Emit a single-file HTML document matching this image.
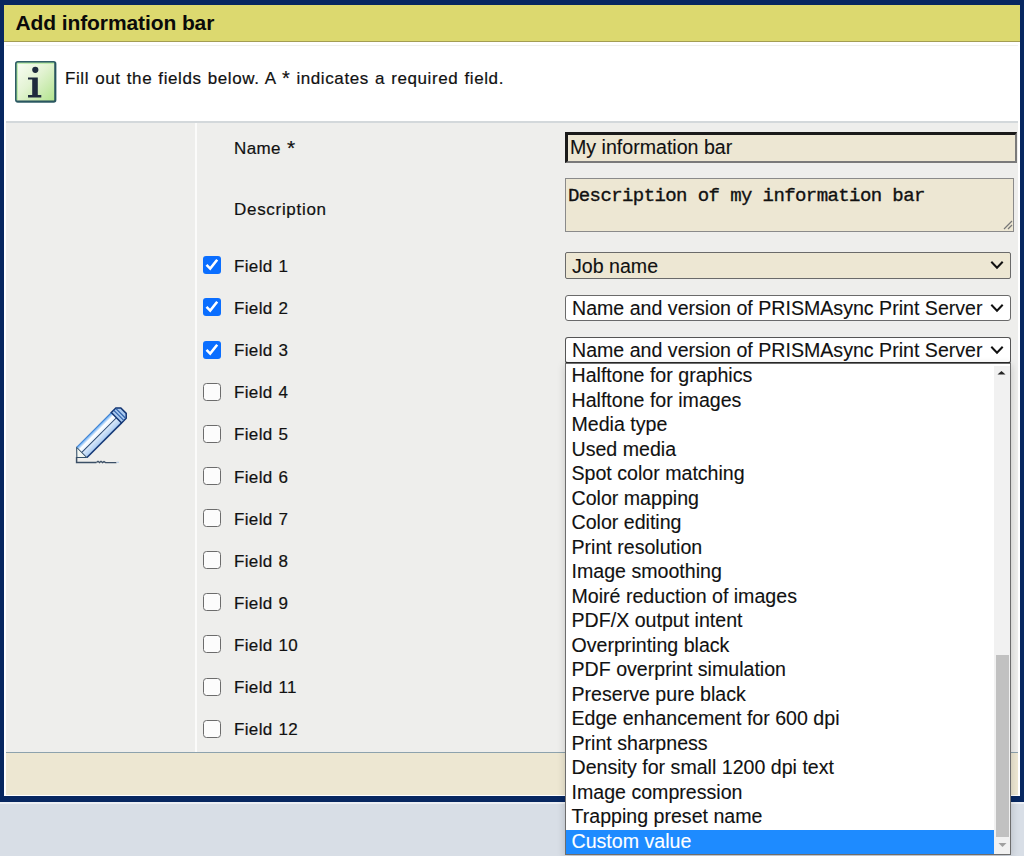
<!DOCTYPE html>
<html><head><meta charset="utf-8">
<style>
*{margin:0;padding:0;box-sizing:border-box}
html,body{width:1024px;height:856px;overflow:hidden;background:#d8dee6;font-family:"Liberation Sans",sans-serif;color:#111}
.a{position:absolute}
#frame{left:0;top:0;width:1024px;height:802px;background:#072760}
#title{left:4px;top:5px;width:1016px;height:38px;background:#dcd96f;border-bottom:2px solid #a39d52}
#title span{position:absolute;left:11.5px;top:6px;letter-spacing:-0.1px;font-weight:bold;font-size:21px;line-height:24px;color:#0a0a0a}
#info{left:4px;top:42px;width:1016px;height:754px;background:#fff}
#infoline{left:6px;top:121px;width:1012px;height:2px;background:#d3d8db}
#content{left:6px;top:123px;width:1012px;height:629px;background:#eeeeec}
#vline{left:195px;top:123px;width:2px;height:629px;background:#fbfbfa}
#fline{left:6px;top:752px;width:1012px;height:1px;background:#8da2ad}
#footer{left:6px;top:753px;width:1012px;height:42px;background:#ede7d2}
#fwhite{left:4px;top:795px;width:1016px;height:1px;background:#fff}
.lbl{position:absolute;left:234px;-webkit-text-stroke:0.2px #111;font-size:17px;letter-spacing:0.35px;word-spacing:0.8px;line-height:20px;color:#111}
.cb{position:absolute;left:203.4px;width:18px;height:18px;border-radius:3px}
.cb.on{background:#0a6eff}
.cb.off{background:#fcfcfc;border:1.5px solid #6c6c6c;border-radius:3.5px}
.sel{position:absolute;left:565px;width:446px;height:27px;-webkit-text-stroke:0.12px #111;border:1px solid #6a6a6a;border-radius:3px;background:#fff;font-size:19.6px;line-height:25px;padding-left:6px;white-space:nowrap;overflow:hidden}
.sel svg{position:absolute;right:6px;top:7px}
#list{left:565px;top:363px;width:446px;height:492px;background:#fff;border:1px solid #6d6d6d;box-shadow:0 2px 8px rgba(0,0,0,.18)}
.opt{position:absolute;left:0;width:428px;height:24.5px;-webkit-text-stroke:0.12px currentColor;font-size:19.6px;line-height:23.5px;padding-left:5.5px;white-space:nowrap}
</style></head><body>
<div class="a" id="frame"></div>
<div class="a" id="title"><span>Add information bar</span></div>
<div class="a" id="info"></div>
<div class="a" id="infoline"></div>
<div class="a" style="left:6px;top:45px;width:1012px;height:1px;background:#f0f1ee"></div>
<div class="a" id="content"></div>
<div class="a" id="vline"></div>
<div class="a" id="fline"></div>
<div class="a" id="footer"></div>
<div class="a" id="fwhite"></div>
<div class="a" style="left:0;top:802px;width:1024px;height:2px;background:#eceff4"></div>

<svg class="a" style="left:15px;top:60.5px" width="42" height="42" viewBox="0 0 42 42">
<defs><linearGradient id="ig" x1="0" y1="0" x2="1" y2="1"><stop offset="0" stop-color="#fafdf6"/><stop offset="0.45" stop-color="#e3f3d3"/><stop offset="1" stop-color="#b0e38a"/></linearGradient></defs>
<rect x="0.9" y="0.9" width="39.6" height="40" rx="1.8" fill="url(#ig)" stroke="#2f5e66" stroke-width="1.8"/>
<path d="M2 40 H40 V2" fill="none" stroke="#264f5a" stroke-width="1.2"/>
<path d="M2.2 39 V2.2 H39" fill="none" stroke="#8fe07a" stroke-width="0.9" opacity="0.8"/>
<circle cx="20.3" cy="8.8" r="3.1" fill="#1f2b3d"/>
<path d="M13 16.4 H22.8 V34 H26.3 V36.4 H13 V34 H17.2 V18.6 H13 Z" fill="#1f2b3d"/>
</svg>
<div class="a" style="left:65px;top:69px;font-size:17px;line-height:20px;letter-spacing:0.6px;word-spacing:0.8px;-webkit-text-stroke:0.2px #111;color:#111">Fill out the fields below. A <span style="font-size:20px;line-height:0;position:relative;top:1.2px">*</span> indicates a required field.</div>
<div class="lbl" style="top:139px">Name <span style="font-size:21px;line-height:0;position:relative;left:0.3px;top:1.4px">*</span></div>
<div class="lbl" style="top:199.5px;letter-spacing:0.7px">Description</div>
<div class="lbl" style="top:257.0px">Field 1</div>
<div class="lbl" style="top:299.1px">Field 2</div>
<div class="lbl" style="top:341.2px">Field 3</div>
<div class="lbl" style="top:383.3px">Field 4</div>
<div class="lbl" style="top:425.4px">Field 5</div>
<div class="lbl" style="top:467.5px">Field 6</div>
<div class="lbl" style="top:509.6px">Field 7</div>
<div class="lbl" style="top:551.7px">Field 8</div>
<div class="lbl" style="top:593.8px">Field 9</div>
<div class="lbl" style="top:635.9px">Field 10</div>
<div class="lbl" style="top:678.0px">Field 11</div>
<div class="lbl" style="top:720.1px">Field 12</div>
<svg class="cb on" style="top:256.30px" width="18" height="18" viewBox="0 0 18 18"><path d="M3.5 8.9 L7.2 12.6 L14.2 3.8" fill="none" stroke="#fff" stroke-width="2.6"/></svg>
<svg class="cb on" style="top:298.42px" width="18" height="18" viewBox="0 0 18 18"><path d="M3.5 8.9 L7.2 12.6 L14.2 3.8" fill="none" stroke="#fff" stroke-width="2.6"/></svg>
<svg class="cb on" style="top:340.54px" width="18" height="18" viewBox="0 0 18 18"><path d="M3.5 8.9 L7.2 12.6 L14.2 3.8" fill="none" stroke="#fff" stroke-width="2.6"/></svg>
<div class="cb off" style="top:382.66px"></div>
<div class="cb off" style="top:424.78px"></div>
<div class="cb off" style="top:466.90px"></div>
<div class="cb off" style="top:509.02px"></div>
<div class="cb off" style="top:551.14px"></div>
<div class="cb off" style="top:593.26px"></div>
<div class="cb off" style="top:635.38px"></div>
<div class="cb off" style="top:677.50px"></div>
<div class="cb off" style="top:719.62px"></div>

<div class="a" style="left:565px;top:132px;width:452px;height:31px;background:#ede7d3;border-top:3px solid #1a1a1a;border-left:3px solid #1a1a1a;border-right:2px solid #7a7a7a;border-bottom:2px solid #7a7a7a;font-size:19.6px;line-height:25px;padding-left:2px;-webkit-text-stroke:0.12px #111;color:#111">My information bar</div>
<div class="a" style="left:565px;top:178px;width:449px;height:54px;background:#ede7d3;border:1px solid #8a8a8a;font-family:'Liberation Mono',monospace;-webkit-text-stroke:0.35px #111;font-size:19px;letter-spacing:-0.59px;line-height:22px;padding:6px 0 0 2px;color:#111">Description of my information bar</div>
<svg class="a" style="left:1001px;top:218px" width="12" height="12" viewBox="0 0 12 12"><path d="M11 3 L3 11 M11 7 L7 11" stroke="#777" stroke-width="1.2"/></svg>
<div class="sel" style="top:252px;background:#ede7d3;border-color:#6a6a6a;border-width:1.5px;border-radius:2px;line-height:26px">Job name<svg width="14" height="10" viewBox="0 0 14 10"><path d="M1.3 1.8 L7 7.8 L12.7 1.8" fill="none" stroke="#111" stroke-width="2"/></svg></div>
<div class="sel" style="top:295px;height:26px">Name and version of PRISMAsync Print Server<svg width="14" height="10" viewBox="0 0 14 10"><path d="M1.3 1.8 L7 7.8 L12.7 1.8" fill="none" stroke="#111" stroke-width="2"/></svg></div>
<div class="sel" style="top:337px;height:26.5px;border-color:#555;border-bottom:2px solid #2a2a2a">Name and version of PRISMAsync Print Server<svg width="14" height="10" viewBox="0 0 14 10"><path d="M1.3 1.8 L7 7.8 L12.7 1.8" fill="none" stroke="#111" stroke-width="2"/></svg></div>
<div class="a" id="list">
<div class="opt" style="top:0.00px">Halftone for graphics</div>
<div class="opt" style="top:24.50px">Halftone for images</div>
<div class="opt" style="top:49.00px">Media type</div>
<div class="opt" style="top:73.50px">Used media</div>
<div class="opt" style="top:98.00px">Spot color matching</div>
<div class="opt" style="top:122.50px">Color mapping</div>
<div class="opt" style="top:147.00px">Color editing</div>
<div class="opt" style="top:171.50px">Print resolution</div>
<div class="opt" style="top:196.00px">Image smoothing</div>
<div class="opt" style="top:220.50px">Moiré reduction of images</div>
<div class="opt" style="top:245.00px">PDF/X output intent</div>
<div class="opt" style="top:269.50px">Overprinting black</div>
<div class="opt" style="top:294.00px">PDF overprint simulation</div>
<div class="opt" style="top:318.50px">Preserve pure black</div>
<div class="opt" style="top:343.00px">Edge enhancement for 600 dpi</div>
<div class="opt" style="top:367.50px">Print sharpness</div>
<div class="opt" style="top:392.00px">Density for small 1200 dpi text</div>
<div class="opt" style="top:416.50px">Image compression</div>
<div class="opt" style="top:441.00px">Trapping preset name</div>
<div class="opt" style="top:465.50px;background:#1e8bff;color:#fff">Custom value</div>
<div class="a" style="left:428px;top:2px;width:16px;height:488px;background:#f1f1f1"></div>
<div class="a" style="left:430px;top:291px;width:13px;height:182px;background:#c1c1c1"></div>
<svg class="a" style="left:430px;top:5px" width="11" height="7" viewBox="0 0 11 7"><path d="M1.5 5.5 L5.5 2 L9.5 5.5Z" fill="#252525"/></svg>
<svg class="a" style="left:431px;top:478px" width="11" height="7" viewBox="0 0 11 7"><path d="M1.5 1 L5.5 5 L9.5 1Z" fill="#a0a0a0"/></svg>
</div>

<svg class="a" style="left:60px;top:390px" width="80" height="80" viewBox="0 0 80 80">
<defs>
<linearGradient id="pb" x1="0" y1="0" x2="0" y2="1"><stop offset="0" stop-color="#4f9ef0"/><stop offset="0.25" stop-color="#ffffff"/><stop offset="0.5" stop-color="#e8f2fc"/><stop offset="0.55" stop-color="#d8e8fa"/><stop offset="1" stop-color="#a9cbf2"/></linearGradient>
</defs>
<g transform="translate(16.5,67.7) rotate(-45)">
<path d="M0.5 0 L7.5 -7.3 L7.5 7.3 Z" fill="#f2f6f2" stroke="#33506a" stroke-width="1.1" stroke-linejoin="round"/>
<rect x="7.5" y="-7.3" width="49" height="14.6" fill="url(#pb)"/>
<path d="M7.5 -7.3 H56.5" stroke="#3c7fd0" stroke-width="1"/>
<path d="M7.5 7.3 H56.5" stroke="#163a78" stroke-width="1.6"/>
<path d="M7.5 0 H56.5" stroke="#27456e" stroke-width="1"/>
<path d="M56.5 -7.3 H63 L66.5 -3.8 V3.8 L63 7.3 H56.5 Z" fill="#a9c9ef" stroke="#123472" stroke-width="1.5"/>
<path d="M59.8 -7 V7 M62.6 -6.8 V6.8" stroke="#2d5fa8" stroke-width="1.1"/>
<path d="M7.5 -7.3 L7.5 7.3" stroke="#405a74" stroke-width="0.9"/>
</g>
<path d="M16.6 67 V72.6 H36.5" fill="none" stroke="#3b4f66" stroke-width="1.5"/>
<path d="M36.5 72.6 L38 71.3 L39.5 72.6 L41 71.3 L42.5 72.6 L44 71.6 L45.5 72.6 H56.5" fill="none" stroke="#3b4f66" stroke-width="1.3"/>
<path d="M56.5 72.3 H59" stroke="#b9cde6" stroke-width="1.2"/>
</svg>
</body></html>
